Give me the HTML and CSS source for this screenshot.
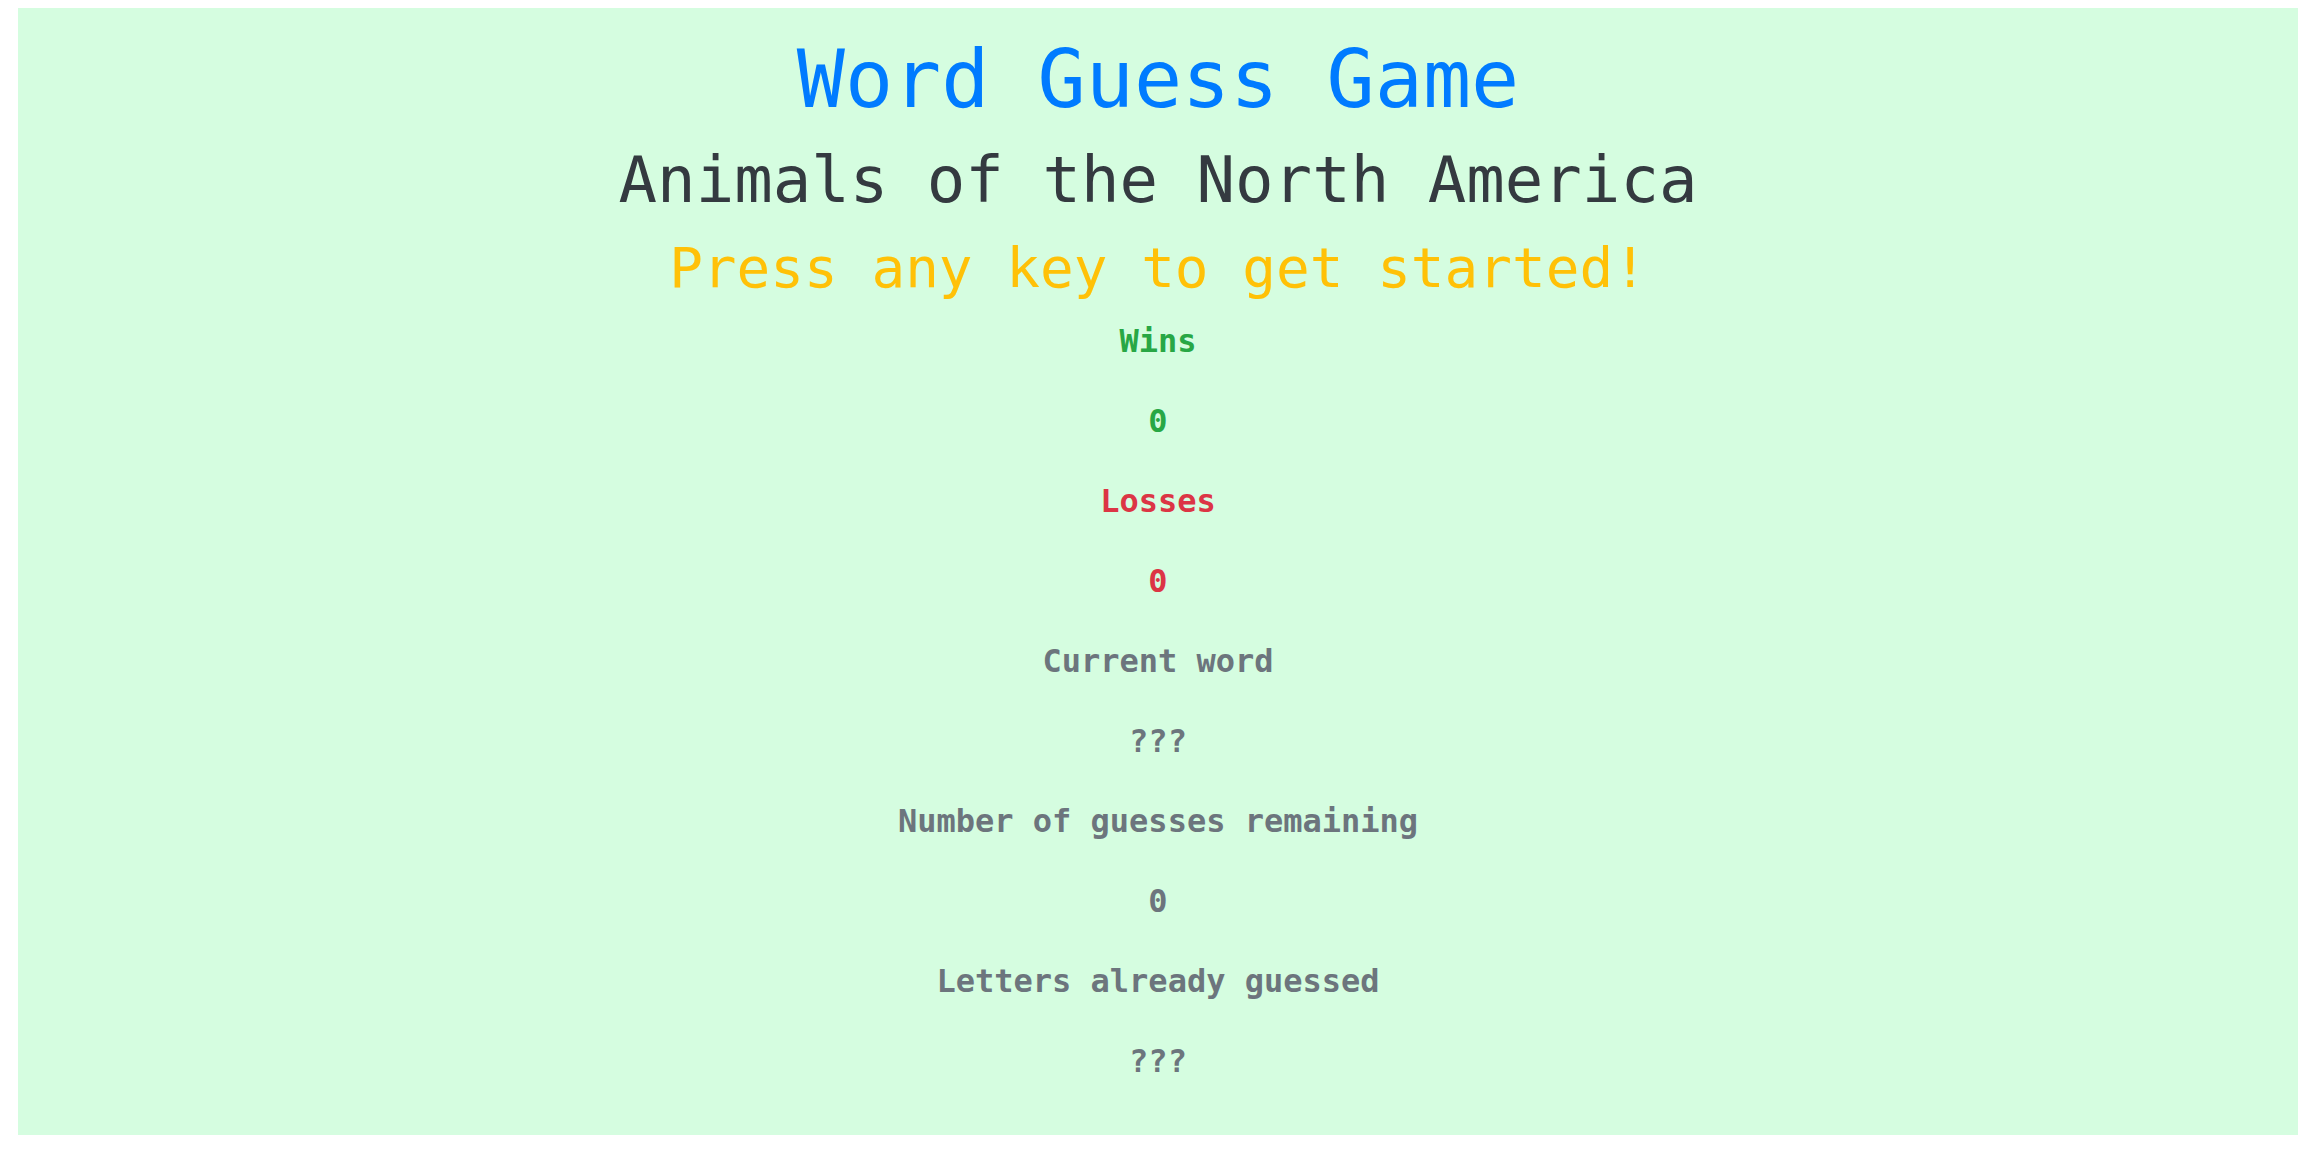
FILE: index.html
```html
<!DOCTYPE html>
<html lang="en">
<head>
<meta charset="utf-8">
<title>Word Guess Game</title>
<link rel="stylesheet" href="styles.css">
</head>
<body>
<main class="game">
  <h1 class="title">Word Guess Game</h1>
  <h2 class="subtitle">Animals of the North America</h2>
  <h3 class="prompt">Press any key to get started!</h3>
  <p class="row win">Wins</p>
  <p class="row win">0</p>
  <p class="row loss">Losses</p>
  <p class="row loss">0</p>
  <p class="row muted">Current word</p>
  <p class="row muted">???</p>
  <p class="row muted">Number of guesses remaining</p>
  <p class="row muted">0</p>
  <p class="row muted">Letters already guessed</p>
  <p class="row muted">???</p>
</main>
</body>
</html>
```
FILE: styles.css
```css
html, body {
  margin: 0;
  padding: 0;
  background: #ffffff;
}
body {
  padding: 8px 21px 0 18px;
  font-family: "DejaVu Sans Mono", "Liberation Mono", monospace;
}
.game {
  background: #d5fde0;
  padding: 24px 0 18px;
  text-align: center;
  display: flex;
  flex-direction: column;
}
.title, .subtitle, .prompt, .row {
  margin: 0;
  font-weight: 400;
}
.title {
  font-size: 80px;
  line-height: 96px;
  color: #007bff;
  margin-bottom: 14px;
}
.subtitle {
  font-size: 64px;
  line-height: 77px;
  color: #343a40;
  margin-bottom: 15px;
}
.prompt {
  font-size: 56px;
  line-height: 67px;
  color: #ffc107;
  margin-bottom: 16px;
}
.row {
  font-size: 32px;
  line-height: 48px;
  font-weight: 700;
  margin-bottom: 32px;
}
.win { color: #28a745; }
.loss { color: #dc3545; }
.muted { color: #6c757d; }
```
